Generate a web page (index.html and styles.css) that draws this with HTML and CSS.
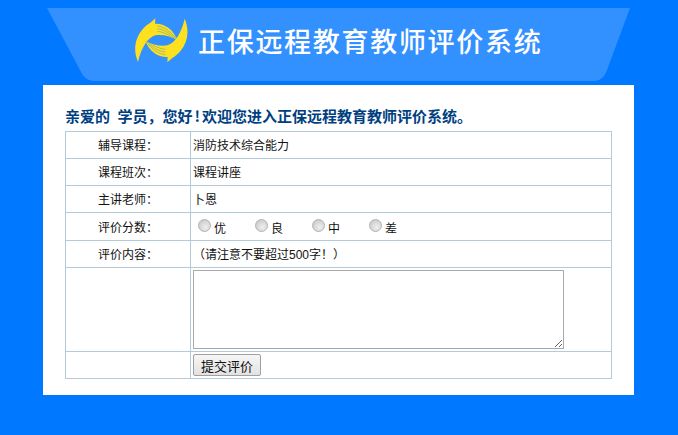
FILE: index.html
```html
<!DOCTYPE html>
<html lang="zh-CN">
<head>
<meta charset="utf-8">
<title>正保远程教育教师评价系统</title>
<link rel="stylesheet" href="styles.css">
</head>
<body>
<header class="banner">
  <svg class="logo" viewBox="25 20 165 150" aria-hidden="true">
    <g>
      <path class="sw-fill" d="M40 158 C26 125 29 90 52 62 C60 52 68 46 76 41 L92 27 L91 43 C120 42 146 60 158 92 C136 80 112 74 92 78 C68 86 50 115 40 158 Z"/>
      <path class="sw-line" d="M98 50 C120 52 142 70 157 91"/>
      <path class="sw-line" d="M98 58 C118 60 138 73 153 89"/>
      <path class="sw-line" d="M98 66 C114 67 132 76 148 87"/>
    </g>
    <g transform="rotate(180 110 93)">
      <path class="sw-fill" d="M40 158 C26 125 29 90 52 62 C60 52 68 46 76 41 L92 27 L91 43 C120 42 146 60 158 92 C136 80 112 74 92 78 C68 86 50 115 40 158 Z"/>
      <path class="sw-line" d="M98 50 C120 52 142 70 157 91"/>
      <path class="sw-line" d="M98 58 C118 60 138 73 153 89"/>
      <path class="sw-line" d="M98 66 C114 67 132 76 148 87"/>
    </g>
  </svg>
  <h1 class="title">正保远程教育教师评价系统</h1>
</header>
<main class="panel">
  <p class="greeting">亲爱的 学员，您好<span class="bang">!</span>欢迎您进入正保远程教育教师评价系统。</p>
  <table class="form-table">
    <tr><th>辅导课程：</th><td>消防技术综合能力</td></tr>
    <tr><th>课程班次：</th><td>课程讲座</td></tr>
    <tr><th>主讲老师：</th><td>卜恩</td></tr>
    <tr class="row-rate"><th>评价分数：</th><td>
      <div class="rates">
        <label class="rate"><input type="radio" name="score"><span>优</span></label>
        <label class="rate"><input type="radio" name="score"><span>良</span></label>
        <label class="rate"><input type="radio" name="score"><span>中</span></label>
        <label class="rate"><input type="radio" name="score"><span>差</span></label>
      </div>
    </td></tr>
    <tr><th>评价内容：</th><td class="hint">（请注意不要超过500字！）</td></tr>
    <tr class="row-text"><th></th><td><textarea class="content"></textarea></td></tr>
    <tr class="row-btn"><th></th><td><button class="submit" type="button">提交评价</button></td></tr>
  </table>
</main>
</body>
</html>
```
FILE: styles.css
```css
html, body {
  margin: 0;
  padding: 0;
}
body {
  height: 435px;
  overflow: hidden;
  background: #0078ff;
  font-family: "Liberation Sans", "Noto Sans CJK SC", sans-serif;
  font-size: 12px;
  color: #111;
}
.banner {
  display: flex;
  align-items: center;
  gap: 10px;
  box-sizing: border-box;
  width: 583px;
  height: 73px;
  margin: 8px 0 0 47px;
  padding: 0 0 7px 86px;
  background: #3390ff;
  clip-path: path("M0 0 L583 0 L560 62 Q556 73 548 73 L46 73 Q38 73 33 62 Z");
}
.logo {
  width: 55px;
  height: 50px;
  flex: none;
}
.sw-fill { fill: #fde01e; }
.sw-line {
  fill: none;
  stroke: #5f9fb8;
  stroke-width: 1.6;
}
.title {
  margin: 0;
  color: #fff;
  font-family: "Noto Sans CJK SC", sans-serif;
  font-size: 27px;
  font-weight: 500;
  letter-spacing: 1.7px;
  line-height: 34px;
  white-space: nowrap;
}
.panel {
  box-sizing: border-box;
  width: 591px;
  height: 310px;
  margin: 4px 0 0 43px;
  padding: 21px 22px 0;
  background: #fff;
}
.greeting {
  margin: 0 0 5px;
  height: 20px;
  color: #003f7f;
  font-family: "Noto Sans CJK SC", sans-serif;
  font-size: 15px;
  font-weight: 700;
  line-height: 20px;
  word-spacing: 4px;
  white-space: nowrap;
}
.bang {
  padding: 0 2px;
}
.form-table {
  border-collapse: collapse;
  table-layout: fixed;
  width: 547px;
}
.form-table th,
.form-table td {
  height: 24px;
  padding: 2px 0 0 2px;
  border: 1px solid #b3cadb;
  font-weight: 400;
  line-height: 16px;
}
.form-table th {
  width: 124px;
  padding-left: 0;
  text-align: center;
}
.form-table td {
  white-space: nowrap;
}
.row-rate th,
.row-rate td {
  height: 25px;
}
.rates {
  display: flex;
  padding-left: 5px;
}
.rate {
  display: flex;
  align-items: center;
  width: 57px;
}
.rate input {
  appearance: none;
  flex: none;
  width: 13px;
  height: 13px;
  margin: -5px 3px 0 0;
  border: 1px solid #b4b4b4;
  border-radius: 50%;
  background: radial-gradient(circle at 60% 65%, #efefef, #cfcfcf 70%);
}
.rate span {
  padding-top: 2px;
}
.form-table .row-text th,
.form-table .row-text td {
  height: 83px;
  padding-top: 0;
}
.form-table .row-btn th,
.form-table .row-btn td {
  height: 26px;
  padding-top: 0;
}
.content {
  display: block;
  box-sizing: border-box;
  width: 371px;
  height: 79px;
  margin: 0;
  padding: 2px;
  border: 1px solid #a9a9a9;
  background: #fff;
}
.submit {
  display: block;
  box-sizing: border-box;
  width: 68px;
  height: 22px;
  padding: 0;
  border: 1px solid #a0a0a0;
  border-radius: 2px;
  background: linear-gradient(#f6f6f6, #e2e2e2);
  color: #111;
  font-family: "Liberation Sans", "Noto Sans CJK SC", sans-serif;
  font-size: 13px;
}
```
